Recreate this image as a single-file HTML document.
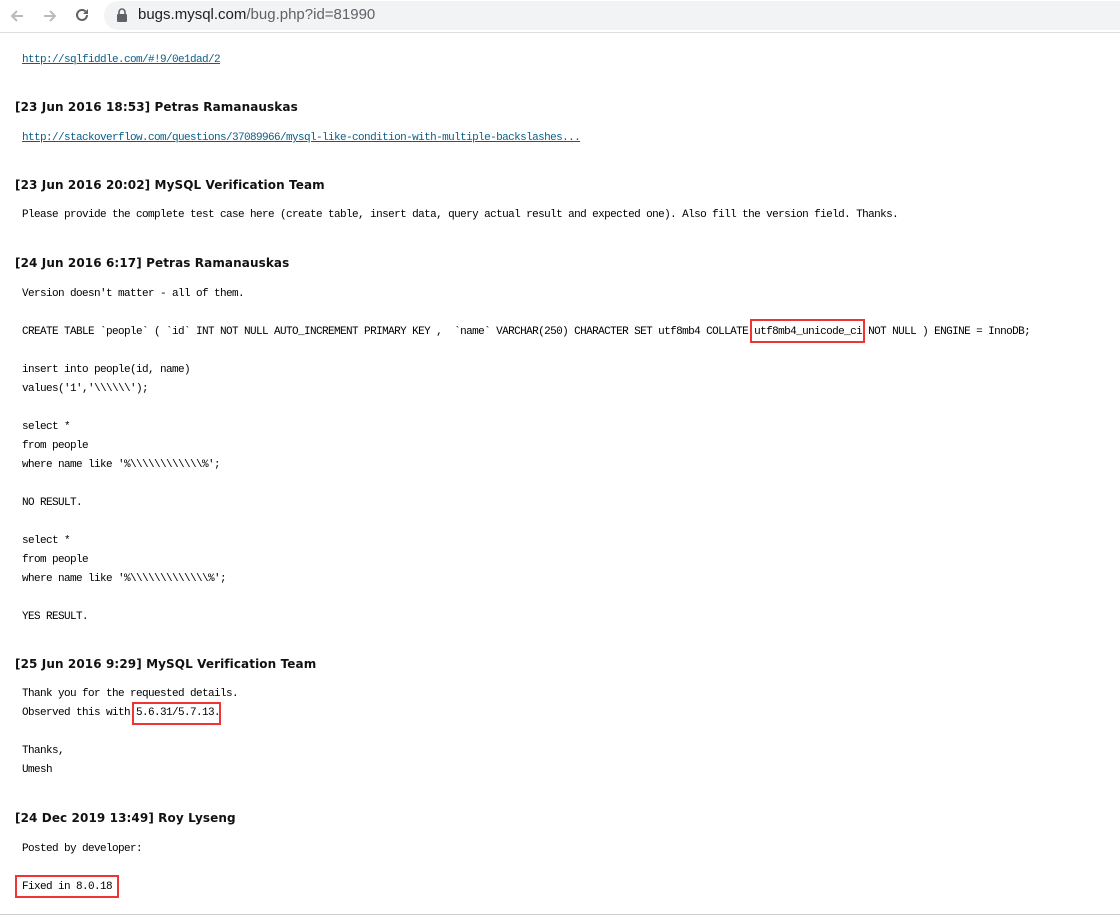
<!DOCTYPE html>
<html><head><meta charset="utf-8"><style>
body{margin:0;width:1120px;height:920px;background:#fff;position:relative;overflow:hidden}
.bar{position:absolute;left:0;top:0;width:1120px;height:32px;background:#fff;border-bottom:1px solid #ddd}
.pill{position:absolute;left:104px;top:1px;width:1016px;height:29px;background:#f1f3f4;border-radius:15px 0 0 15px}
.url{position:absolute;left:138px;top:6px;font:15px "Liberation Sans",sans-serif;color:#202124}
.url span{color:#5f6368}
.m{position:absolute;left:22px;font:11px/19px "Liberation Mono",monospace;letter-spacing:-0.6px;color:#000;white-space:pre}
.h{position:absolute;left:15px;font:bold 12px/19px "DejaVu Sans","Liberation Sans",sans-serif;letter-spacing:0.1px;color:#111;white-space:pre}
a{color:#0a5f8a}
.box{position:absolute;border:2px solid #ee3535}
.foot{position:absolute;left:0;top:914px;width:1120px;height:1px;background:#ccc}
</style></head><body>
<div class="bar"><div class="pill"></div>
<svg style="position:absolute;left:8px;top:7px" width="18" height="18" viewBox="0 0 18 18"><path d="M15 9H4M9 4L4 9l5 5" stroke="#bbb" stroke-width="2" fill="none"/></svg>
<svg style="position:absolute;left:41px;top:7px" width="18" height="18" viewBox="0 0 18 18"><path d="M3 9h11M9 4l5 5-5 5" stroke="#bbb" stroke-width="2" fill="none"/></svg>
<svg style="position:absolute;left:73px;top:6px" width="18" height="18" viewBox="0 0 18 18"><path d="M14 9a5 5 0 1 1-1.5-3.6" stroke="#5f6368" stroke-width="2" fill="none"/><path d="M15 3v5h-5z" fill="#5f6368"/></svg>
<svg style="position:absolute;left:116px;top:8px" width="12" height="14" viewBox="0 0 12 14"><rect x="1" y="6" width="10" height="8" rx="1" fill="#5f6368"/><path d="M3 6V4a3 3 0 0 1 6 0v2" stroke="#5f6368" stroke-width="1.6" fill="none"/></svg>
<div class="url">bugs.mysql.com<span>/bug.php?id=81990</span></div>
</div>
<div class="m" style="top:51px"><a href="#">http://sqlfiddle.com/#!9/0e1dad/2</a></div>
<div class="h" style="top:98px">[23 Jun 2016 18:53] Petras Ramanauskas</div>
<div class="m" style="top:129px"><a href="#">http://stackoverflow.com/questions/37089966/mysql-like-condition-with-multiple-backslashes...</a></div>
<div class="h" style="top:176px">[23 Jun 2016 20:02] MySQL Verification Team</div>
<div class="m" style="top:206px">Please provide the complete test case here (create table, insert data, query actual result and expected one). Also fill the version field. Thanks.</div>
<div class="h" style="top:254px">[24 Jun 2016 6:17] Petras Ramanauskas</div>
<div class="m" style="top:285px">Version doesn't matter - all of them.</div>
<div class="m" style="top:323px">CREATE TABLE `people` ( `id` INT NOT NULL AUTO_INCREMENT PRIMARY KEY ,  `name` VARCHAR(250) CHARACTER SET utf8mb4 COLLATE utf8mb4_unicode_ci NOT NULL ) ENGINE = InnoDB;</div>
<div class="box" style="left:750px;top:319px;width:111px;height:20px"></div>
<div class="m" style="top:361px">insert into people(id, name)
values('1','\\\\\\');

select *
from people
where name like '%\\\\\\\\\\\\%';

NO RESULT.

select *
from people
where name like '%\\\\\\\\\\\\\%';

YES RESULT.</div>
<div class="h" style="top:655px">[25 Jun 2016 9:29] MySQL Verification Team</div>
<div class="m" style="top:685px">Thank you for the requested details.
Observed this with 5.6.31/5.7.13.

Thanks,
Umesh</div>
<div class="box" style="left:132px;top:702px;width:85px;height:19px"></div>
<div class="h" style="top:809px">[24 Dec 2019 13:49] Roy Lyseng</div>
<div class="m" style="top:840px">Posted by developer:</div>
<div class="m" style="top:878px">Fixed in 8.0.18</div>
<div class="box" style="left:15px;top:875px;width:100px;height:19px"></div>
<div class="foot"></div>
</body></html>
